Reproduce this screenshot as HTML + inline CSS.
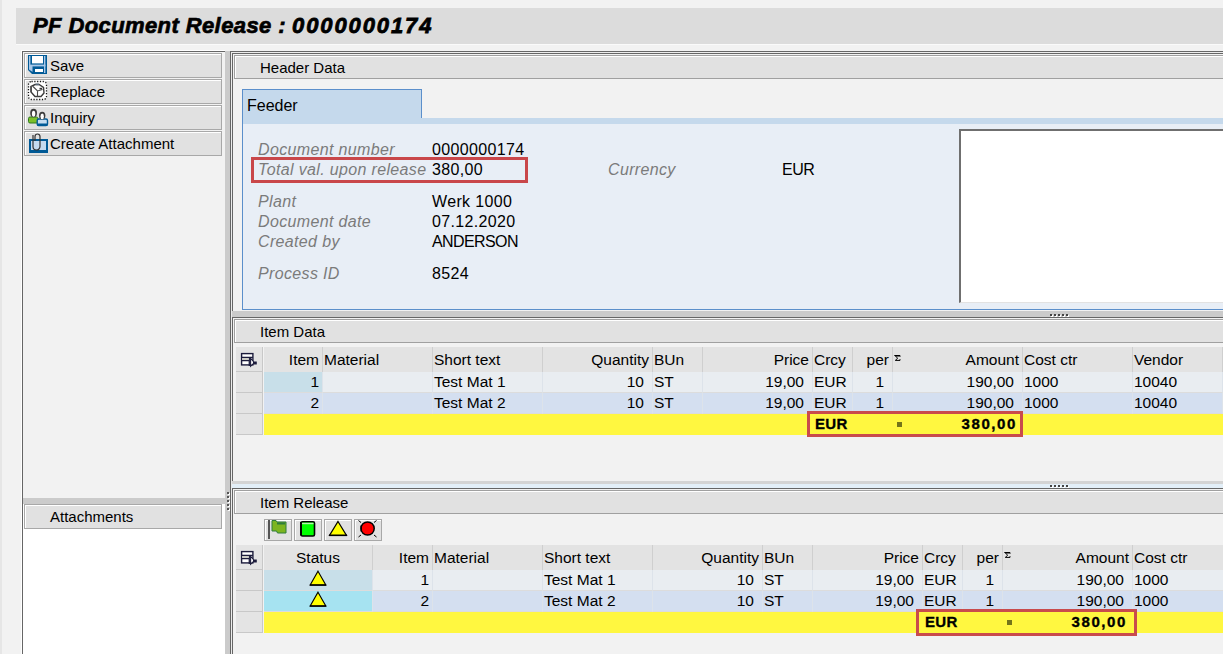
<!DOCTYPE html>
<html><head><meta charset="utf-8">
<style>
*{box-sizing:border-box}
html,body{margin:0;padding:0}
body{width:1223px;height:654px;overflow:hidden;position:relative;background:#f2f2f2;font-family:"Liberation Sans",sans-serif;font-size:15px;color:#000}
.a{position:absolute}
.t{position:absolute;white-space:pre;line-height:17px;font-size:15px;color:#000}
.tt{position:absolute;white-space:pre;line-height:17px;font-size:15.5px;color:#000}
.l{position:absolute;white-space:pre;line-height:17px;font-size:16px;font-style:italic;color:#7b7b7b;letter-spacing:0.35px}
svg{position:absolute;overflow:visible}
</style></head><body>
<div class="a" style="left:0px;top:0px;width:2px;height:654px;background:#e6e6e6"></div>
<div class="a" style="left:16px;top:8px;width:1207px;height:36px;background:#dcdcdc"></div>
<div class="a" style="left:16px;top:44px;width:1207px;height:1px;background:#fafafa"></div>
<div class="t" style="left:33px;top:13px;font-size:22px;line-height:26px;font-weight:bold;font-style:italic;letter-spacing:0.4px;-webkit-text-stroke:0.7px #000">PF Document Release :</div>
<div class="t" style="left:292px;top:13px;font-size:22px;line-height:26px;font-weight:bold;font-style:italic;letter-spacing:1.9px;-webkit-text-stroke:0.8px #000">0000000174</div>
<div class="a" style="left:21px;top:50px;width:204px;height:604px;border-left:1px solid #fff;border-top:1px solid #fff"></div>
<div class="a" style="left:22px;top:51px;width:203px;height:603px;border-left:1px solid #666;border-top:1px solid #666"></div>
<div class="a" style="left:24px;top:53px;width:198px;height:25px;background:#e1e1e1;border:1px solid #a8a8a8;box-shadow:inset 1px 1px 0 #fff"></div>
<div class="t" style="left:50px;top:57px;">Save</div>
<div class="a" style="left:24px;top:79px;width:198px;height:25px;background:#e1e1e1;border:1px solid #a8a8a8;box-shadow:inset 1px 1px 0 #fff"></div>
<div class="t" style="left:50px;top:83px;">Replace</div>
<div class="a" style="left:24px;top:105px;width:198px;height:25px;background:#e1e1e1;border:1px solid #a8a8a8;box-shadow:inset 1px 1px 0 #fff"></div>
<div class="t" style="left:50px;top:109px;">Inquiry</div>
<div class="a" style="left:24px;top:131px;width:198px;height:25px;background:#e1e1e1;border:1px solid #a8a8a8;box-shadow:inset 1px 1px 0 #fff"></div>
<div class="t" style="left:50px;top:135px;">Create Attachment</div>
<svg style="left:28px;top:55px" width="19" height="19" viewBox="0 0 19 19"><path d="M0 0H19V19H4L0 15Z" fill="#005a96"/><rect x="1" y="1" width="1.4" height="9" fill="#a9c8e8"/><rect x="16" y="1" width="1.4" height="17" fill="#a9c8e8"/><rect x="1" y="9.6" width="16.4" height="1.8" fill="#a9c8e8"/><path d="M1 10 H4.5 V17 L1 14.5 Z" fill="#a9c8e8"/><rect x="4" y="1" width="11" height="7.4" fill="#fff"/><rect x="7" y="14" width="8" height="3" fill="#fff"/></svg>
<svg style="left:28px;top:81px" width="19" height="19" viewBox="0 0 19 19"><rect x="0.5" y="0.5" width="18" height="18" rx="3" fill="#fff" stroke="#111" stroke-width="1.3" stroke-dasharray="1.2 1.6"/><path d="M7 3.5 L11 3.5 L15.5 6.5 L16 12 L13 15.5 L7 15.5 L3 11 L3 5.5 Z" fill="#fff" stroke="#3a3a3a" stroke-width="1.4"/><rect x="2.4" y="5" width="1.6" height="6" fill="#505050"/><rect x="7.5" y="2.6" width="3.5" height="1.6" fill="#5a6a7a"/><path d="M5 5.5 L9.5 10 L14.5 8.5 M9.5 10 V15.5" fill="none" stroke="#4a4a4a" stroke-width="1.1"/><rect x="11.5" y="6.8" width="2.6" height="1.6" fill="#333"/></svg>
<svg style="left:28px;top:108px" width="20" height="18" viewBox="0 0 20 18"><rect x="0.5" y="9" width="9.5" height="6" rx="1.5" fill="#7cc02a" stroke="#2f7a1e" stroke-width="1"/><ellipse cx="5.6" cy="5" rx="3.4" ry="4.2" fill="#3c3c3c"/><ellipse cx="5.6" cy="5.8" rx="1.7" ry="3" fill="#fff"/><rect x="9.2" y="11" width="10.3" height="6.5" rx="1.5" fill="#c5dcf0" stroke="#005a96" stroke-width="1.4"/><rect x="9.2" y="15.5" width="10.3" height="2" fill="#005a96"/><ellipse cx="14.2" cy="7.6" rx="3.2" ry="3.9" fill="#3c3c3c"/><ellipse cx="14.2" cy="8.4" rx="1.7" ry="2.8" fill="#fff"/></svg>
<svg style="left:29px;top:133px" width="19" height="20" viewBox="0 0 19 20"><rect x="1" y="7" width="17" height="12" fill="#c3daf0" stroke="#005a96" stroke-width="2"/><rect x="0" y="17" width="19" height="2" fill="#005a96"/><path d="M4 2 V13.5 A3.5 3.5 0 0 0 11 13.5 V3.5 A2.5 2.5 0 0 0 6 3.5 V8" fill="none" stroke="#333" stroke-width="1.2"/></svg>
<div class="a" style="left:23px;top:498px;width:202px;height:6px;background:#cbcbcb"></div>
<div class="a" style="left:23px;top:504px;width:202px;height:150px;background:#fff"></div>
<div class="a" style="left:24px;top:504px;width:198px;height:25px;background:#e1e1e1;border:1px solid #a8a8a8;box-shadow:inset 1px 1px 0 #fff"></div>
<div class="t" style="left:50px;top:508px;">Attachments</div>
<div class="a" style="left:225px;top:51px;width:5px;height:603px;background:#cbcbcb"></div>
<div class="a" style="left:227px;top:492px;width:2px;height:2px;background:#555;box-shadow:1px 1px 0 #fff"></div>
<div class="a" style="left:227px;top:496px;width:2px;height:2px;background:#555;box-shadow:1px 1px 0 #fff"></div>
<div class="a" style="left:227px;top:500px;width:2px;height:2px;background:#555;box-shadow:1px 1px 0 #fff"></div>
<div class="a" style="left:227px;top:504px;width:2px;height:2px;background:#555;box-shadow:1px 1px 0 #fff"></div>
<div class="a" style="left:227px;top:508px;width:2px;height:2px;background:#555;box-shadow:1px 1px 0 #fff"></div>
<div class="a" style="left:230px;top:51px;width:993px;height:603px;border-left:1px solid #666;border-top:1px solid #666"></div>
<div class="a" style="left:231px;top:52px;width:992px;height:602px;border-left:1px solid #ececec;border-top:1px solid #ececec"></div>
<div class="a" style="left:232px;top:53px;width:991px;height:258px;border-left:1px solid #666;border-top:1px solid #666"></div>
<div class="a" style="left:234px;top:55px;width:989px;height:24px;background:#e1e1e1;border:1px solid #a0a0a0;border-right:none;box-shadow:inset 1px 1px 0 #fff"></div>
<div class="t" style="left:260px;top:59px;">Header Data</div>
<div class="a" style="left:242px;top:89px;width:180px;height:30px;background:#c5d9ec;border:1px solid #5b8fcb;border-bottom:none"></div>
<div class="a" style="left:242px;top:118px;width:981px;height:6px;background:#c5d9ec;border-left:1px solid #5b8fcb"></div>
<div class="a" style="left:242px;top:124px;width:981px;height:186px;background:#e8eef6;border-left:1px solid #5b8fcb;border-bottom:1px solid #5b8fcb"></div>
<div class="t" style="left:247px;top:97px;font-size:16px">Feeder</div>
<div class="l" style="left:258px;top:141px;">Document number</div>
<div class="t" style="left:432px;top:141px;font-size:16px;letter-spacing:0.35px">0000000174</div>
<div class="l" style="left:258px;top:161px;">Total val. upon release</div>
<div class="t" style="left:432px;top:161px;font-size:16px;letter-spacing:0.35px">380,00</div>
<div class="l" style="left:258px;top:193px;">Plant</div>
<div class="t" style="left:432px;top:193px;font-size:16px;letter-spacing:0.35px">Werk 1000</div>
<div class="l" style="left:258px;top:213px;">Document date</div>
<div class="t" style="left:432px;top:213px;font-size:16px;letter-spacing:0.35px">07.12.2020</div>
<div class="l" style="left:258px;top:233px;">Created by</div>
<div class="t" style="left:432px;top:233px;font-size:16px;letter-spacing:-0.6px">ANDERSON</div>
<div class="l" style="left:258px;top:265px;">Process ID</div>
<div class="t" style="left:432px;top:265px;font-size:16px;letter-spacing:0.35px">8524</div>
<div class="l" style="left:608px;top:161px;">Currency</div>
<div class="t" style="left:782px;top:161px;font-size:16px;letter-spacing:-0.5px">EUR</div>
<div class="a" style="left:251px;top:157px;width:277px;height:26px;border:3px solid #c9474a"></div>
<div class="a" style="left:959px;top:129px;width:264px;height:174px;background:#fff;border-top:2px solid #6f6f6f;border-left:2px solid #6f6f6f;border-bottom:1px solid #e2e2e2"></div>
<div class="a" style="left:232px;top:311px;width:991px;height:6px;background:#cbcbcb"></div>
<div class="a" style="left:1050px;top:314px;width:2px;height:2px;background:#444;box-shadow:1px 1px 0 #fff"></div>
<div class="a" style="left:1054px;top:314px;width:2px;height:2px;background:#444;box-shadow:1px 1px 0 #fff"></div>
<div class="a" style="left:1058px;top:314px;width:2px;height:2px;background:#444;box-shadow:1px 1px 0 #fff"></div>
<div class="a" style="left:1062px;top:314px;width:2px;height:2px;background:#444;box-shadow:1px 1px 0 #fff"></div>
<div class="a" style="left:1066px;top:314px;width:2px;height:2px;background:#444;box-shadow:1px 1px 0 #fff"></div>
<div class="a" style="left:232px;top:317px;width:991px;height:166px;border-left:1px solid #666;border-top:1px solid #666"></div>
<div class="a" style="left:232px;top:484px;width:2px;height:2px;background:#000"></div>
<div class="a" style="left:232px;top:486px;width:2px;height:2px;background:#000"></div>
<div class="a" style="left:234px;top:319px;width:989px;height:24px;background:#e1e1e1;border:1px solid #a0a0a0;border-right:none;box-shadow:inset 1px 1px 0 #fff"></div>
<div class="t" style="left:260px;top:323px;">Item Data</div>
<div class="a" style="left:236px;top:347px;width:27px;height:25px;background:#e4e4e4;border-right:1px solid #c8c8c8;border-bottom:1px solid #c8c8c8"></div>
<div class="a" style="left:236px;top:372px;width:27px;height:21px;background:#e4e4e4;border-right:1px solid #c8c8c8;border-bottom:1px solid #c8c8c8"></div>
<div class="a" style="left:236px;top:393px;width:27px;height:21px;background:#e4e4e4;border-right:1px solid #c8c8c8;border-bottom:1px solid #c8c8c8"></div>
<div class="a" style="left:236px;top:414px;width:27px;height:21px;background:#e4e4e4;border-right:1px solid #c8c8c8;border-bottom:1px solid #c8c8c8"></div>
<svg style="left:240px;top:352px" width="18" height="16" viewBox="0 0 18 16"><rect x="1.6" y="1.6" width="11.3" height="11.3" fill="#fff" stroke="#1c1c3c" stroke-width="1.4"/><path d="M1.6 5.3 H12.9 M1.6 8.6 H9.3 M9.3 5.3 V14" stroke="#1c1c3c" stroke-width="1.3" fill="none"/><rect x="2.4" y="6.1" width="6.2" height="1.8" fill="#c9c9c0"/><path d="M10.6 6.2 V14.2 L12.8 12 H16.2 V10 H13.8 Z" fill="#fff" stroke="#1c1c3c" stroke-width="1.1"/><rect x="13" y="10" width="3.2" height="2" fill="#1c1c3c"/></svg>
<div class="a" style="left:264px;top:347px;width:59px;height:25px;background:#e3e3e3;border-right:1px solid #cfcfcf;box-shadow:1px 0 0 #f6f6f6"></div>
<div class="tt" style="right:904px;top:351px;">Item</div>
<div class="a" style="left:323px;top:347px;width:110px;height:25px;background:#e3e3e3;border-right:1px solid #cfcfcf;box-shadow:1px 0 0 #f6f6f6"></div>
<div class="tt" style="left:324px;top:351px;">Material</div>
<div class="a" style="left:433px;top:347px;width:110px;height:25px;background:#e3e3e3;border-right:1px solid #cfcfcf;box-shadow:1px 0 0 #f6f6f6"></div>
<div class="tt" style="left:434px;top:351px;">Short text</div>
<div class="a" style="left:543px;top:347px;width:110px;height:25px;background:#e3e3e3;border-right:1px solid #cfcfcf;box-shadow:1px 0 0 #f6f6f6"></div>
<div class="tt" style="right:574px;top:351px;">Quantity</div>
<div class="a" style="left:653px;top:347px;width:50px;height:25px;background:#e3e3e3;border-right:1px solid #cfcfcf;box-shadow:1px 0 0 #f6f6f6"></div>
<div class="tt" style="left:654px;top:351px;">BUn</div>
<div class="a" style="left:703px;top:347px;width:110px;height:25px;background:#e3e3e3;border-right:1px solid #cfcfcf;box-shadow:1px 0 0 #f6f6f6"></div>
<div class="tt" style="right:414px;top:351px;">Price</div>
<div class="a" style="left:813px;top:347px;width:40px;height:25px;background:#e3e3e3;border-right:1px solid #cfcfcf;box-shadow:1px 0 0 #f6f6f6"></div>
<div class="tt" style="left:814px;top:351px;">Crcy</div>
<div class="a" style="left:853px;top:347px;width:40px;height:25px;background:#e3e3e3;border-right:1px solid #cfcfcf;box-shadow:1px 0 0 #f6f6f6"></div>
<div class="tt" style="right:334px;top:351px;">per</div>
<div class="a" style="left:893px;top:347px;width:130px;height:25px;background:#e3e3e3;border-right:1px solid #cfcfcf;box-shadow:1px 0 0 #f6f6f6"></div>
<div class="tt" style="right:204px;top:351px;">Amount</div>
<div class="a" style="left:1023px;top:347px;width:110px;height:25px;background:#e3e3e3;border-right:1px solid #cfcfcf;box-shadow:1px 0 0 #f6f6f6"></div>
<div class="tt" style="left:1024px;top:351px;">Cost ctr</div>
<div class="a" style="left:1133px;top:347px;width:90px;height:25px;background:#e3e3e3;border-right:1px solid #cfcfcf;box-shadow:1px 0 0 #f6f6f6"></div>
<div class="tt" style="left:1134px;top:351px;">Vendor</div>
<div class="a" style="left:264px;top:372px;width:59px;height:21px;background:#c8dfe9;border-right:1px solid #dde3ea;border-bottom:1px solid #dcdcdc"></div>
<div class="tt" style="right:904px;top:373px;">1</div>
<div class="a" style="left:323px;top:372px;width:110px;height:21px;background:#e9edf1;border-right:1px solid #dde3ea;border-bottom:1px solid #dcdcdc"></div>
<div class="a" style="left:433px;top:372px;width:110px;height:21px;background:#e9edf1;border-right:1px solid #dde3ea;border-bottom:1px solid #dcdcdc"></div>
<div class="tt" style="left:434px;top:373px;">Test Mat 1</div>
<div class="a" style="left:543px;top:372px;width:110px;height:21px;background:#e9edf1;border-right:1px solid #dde3ea;border-bottom:1px solid #dcdcdc"></div>
<div class="tt" style="right:579px;top:373px;">10</div>
<div class="a" style="left:653px;top:372px;width:50px;height:21px;background:#e9edf1;border-right:1px solid #dde3ea;border-bottom:1px solid #dcdcdc"></div>
<div class="tt" style="left:654px;top:373px;">ST</div>
<div class="a" style="left:703px;top:372px;width:110px;height:21px;background:#e9edf1;border-right:1px solid #dde3ea;border-bottom:1px solid #dcdcdc"></div>
<div class="tt" style="right:419px;top:373px;">19,00</div>
<div class="a" style="left:813px;top:372px;width:40px;height:21px;background:#e9edf1;border-right:1px solid #dde3ea;border-bottom:1px solid #dcdcdc"></div>
<div class="tt" style="left:814px;top:373px;">EUR</div>
<div class="a" style="left:853px;top:372px;width:40px;height:21px;background:#e9edf1;border-right:1px solid #dde3ea;border-bottom:1px solid #dcdcdc"></div>
<div class="tt" style="right:339px;top:373px;">1</div>
<div class="a" style="left:893px;top:372px;width:130px;height:21px;background:#e9edf1;border-right:1px solid #dde3ea;border-bottom:1px solid #dcdcdc"></div>
<div class="tt" style="right:209px;top:373px;">190,00</div>
<div class="a" style="left:1023px;top:372px;width:110px;height:21px;background:#e9edf1;border-right:1px solid #dde3ea;border-bottom:1px solid #dcdcdc"></div>
<div class="tt" style="left:1024px;top:373px;">1000</div>
<div class="a" style="left:1133px;top:372px;width:90px;height:21px;background:#e9edf1;border-right:1px solid #dde3ea;border-bottom:1px solid #dcdcdc"></div>
<div class="tt" style="left:1134px;top:373px;">10040</div>
<div class="a" style="left:264px;top:393px;width:59px;height:21px;background:#d4dff0;border-right:1px solid #dde3ea;border-bottom:1px solid #dcdcdc"></div>
<div class="tt" style="right:904px;top:394px;">2</div>
<div class="a" style="left:323px;top:393px;width:110px;height:21px;background:#d4dff0;border-right:1px solid #dde3ea;border-bottom:1px solid #dcdcdc"></div>
<div class="a" style="left:433px;top:393px;width:110px;height:21px;background:#d4dff0;border-right:1px solid #dde3ea;border-bottom:1px solid #dcdcdc"></div>
<div class="tt" style="left:434px;top:394px;">Test Mat 2</div>
<div class="a" style="left:543px;top:393px;width:110px;height:21px;background:#d4dff0;border-right:1px solid #dde3ea;border-bottom:1px solid #dcdcdc"></div>
<div class="tt" style="right:579px;top:394px;">10</div>
<div class="a" style="left:653px;top:393px;width:50px;height:21px;background:#d4dff0;border-right:1px solid #dde3ea;border-bottom:1px solid #dcdcdc"></div>
<div class="tt" style="left:654px;top:394px;">ST</div>
<div class="a" style="left:703px;top:393px;width:110px;height:21px;background:#d4dff0;border-right:1px solid #dde3ea;border-bottom:1px solid #dcdcdc"></div>
<div class="tt" style="right:419px;top:394px;">19,00</div>
<div class="a" style="left:813px;top:393px;width:40px;height:21px;background:#d4dff0;border-right:1px solid #dde3ea;border-bottom:1px solid #dcdcdc"></div>
<div class="tt" style="left:814px;top:394px;">EUR</div>
<div class="a" style="left:853px;top:393px;width:40px;height:21px;background:#d4dff0;border-right:1px solid #dde3ea;border-bottom:1px solid #dcdcdc"></div>
<div class="tt" style="right:339px;top:394px;">1</div>
<div class="a" style="left:893px;top:393px;width:130px;height:21px;background:#d4dff0;border-right:1px solid #dde3ea;border-bottom:1px solid #dcdcdc"></div>
<div class="tt" style="right:209px;top:394px;">190,00</div>
<div class="a" style="left:1023px;top:393px;width:110px;height:21px;background:#d4dff0;border-right:1px solid #dde3ea;border-bottom:1px solid #dcdcdc"></div>
<div class="tt" style="left:1024px;top:394px;">1000</div>
<div class="a" style="left:1133px;top:393px;width:90px;height:21px;background:#d4dff0;border-right:1px solid #dde3ea;border-bottom:1px solid #dcdcdc"></div>
<div class="tt" style="left:1134px;top:394px;">10040</div>
<div class="a" style="left:264px;top:414px;width:959px;height:21px;background:#fff740"></div>
<div class="t" style="left:815px;top:415px;font-weight:bold;letter-spacing:0.3px;-webkit-text-stroke:0.3px #000">EUR</div>
<div class="a" style="left:897px;top:422px;width:5px;height:5px;background:#74741a"></div>
<div class="t" style="right:206px;top:415px;font-weight:bold;letter-spacing:1.6px;-webkit-text-stroke:0.35px #000">380,00</div>
<div class="a" style="left:807px;top:411px;width:216px;height:26px;border:3px solid #c94b4c"></div>
<svg style="left:894px;top:355px" width="7" height="7" viewBox="0 0 7 7"><path d="M0.3 0.5 H6 V1.8 M5.5 1 H1.3 L3.7 3.2 L1.3 5.4 H6 V4.2" fill="none" stroke="#000" stroke-width="1"/></svg>
<div class="a" style="left:232px;top:481px;width:991px;height:3px;background:#d4d4d4"></div>
<div class="a" style="left:232px;top:484px;width:991px;height:4px;background:#e3eff8"></div>
<div class="a" style="left:1050px;top:485px;width:2px;height:2px;background:#444;box-shadow:1px 1px 0 #fff"></div>
<div class="a" style="left:1054px;top:485px;width:2px;height:2px;background:#444;box-shadow:1px 1px 0 #fff"></div>
<div class="a" style="left:1058px;top:485px;width:2px;height:2px;background:#444;box-shadow:1px 1px 0 #fff"></div>
<div class="a" style="left:1062px;top:485px;width:2px;height:2px;background:#444;box-shadow:1px 1px 0 #fff"></div>
<div class="a" style="left:1066px;top:485px;width:2px;height:2px;background:#444;box-shadow:1px 1px 0 #fff"></div>
<div class="a" style="left:232px;top:488px;width:991px;height:166px;border-left:1px solid #666;border-top:1px solid #666"></div>
<div class="a" style="left:234px;top:490px;width:989px;height:24px;background:#e1e1e1;border:1px solid #a0a0a0;border-right:none;box-shadow:inset 1px 1px 0 #fff"></div>
<div class="t" style="left:260px;top:494px;">Item Release</div>
<div class="a" style="left:264px;top:519px;width:28px;height:22px;background:#e1e1e1;border:1px solid #a8a8a8;box-shadow:inset 1px 1px 0 #fff"></div>
<div class="a" style="left:294px;top:519px;width:28px;height:22px;background:#e1e1e1;border:1px solid #a8a8a8;box-shadow:inset 1px 1px 0 #fff"></div>
<div class="a" style="left:324px;top:519px;width:28px;height:22px;background:#e1e1e1;border:1px solid #a8a8a8;box-shadow:inset 1px 1px 0 #fff"></div>
<div class="a" style="left:354px;top:519px;width:28px;height:22px;background:#e1e1e1;border:1px solid #a8a8a8;box-shadow:inset 1px 1px 0 #fff"></div>
<svg style="left:268px;top:520px" width="20" height="20" viewBox="0 0 20 20"><rect x="0" y="0" width="2" height="19" fill="#555"/><path d="M4 0.5 H8 L9 2 H18 V13 H9.5 L8.5 11 H4 Z" fill="#7cb51f" stroke="#2e7d3b" stroke-width="1"/><rect x="9" y="2.5" width="8" height="2" fill="#2e7d3b"/></svg>
<svg style="left:300px;top:521px" width="16" height="16" viewBox="0 0 16 16"><rect x="1" y="0.8" width="13.5" height="14.2" rx="1.5" fill="#00ff00" stroke="#000" stroke-width="1.6"/><rect x="0" y="1" width="2" height="13.5" fill="#000"/><rect x="2" y="1.8" width="11.5" height="1.4" fill="#b8f0b0"/></svg>
<svg style="left:328px;top:520px" width="20" height="17" viewBox="0 0 20 17"><path d="M10 1.5 L18.5 15.5 L1.5 15.5 Z" fill="#ffff00" stroke="#000" stroke-width="1.2"/><rect x="1" y="14.5" width="18" height="1.6" fill="#000"/></svg>
<svg style="left:358px;top:520px" width="20" height="18" viewBox="0 0 20 18"><path d="M0.5 0.5 L3 2.5 M18.5 0.5 L16 2.5 M0.5 17 L3 15 M18.5 17 L16 15" stroke="#000" stroke-width="1"/><circle cx="9.6" cy="8.5" r="6.6" fill="#ff0000" stroke="#000" stroke-width="1.5"/><rect x="2.5" y="5.5" width="1.5" height="6" fill="#000"/></svg>
<div class="a" style="left:236px;top:545px;width:27px;height:25px;background:#e4e4e4;border-right:1px solid #c8c8c8;border-bottom:1px solid #c8c8c8"></div>
<div class="a" style="left:236px;top:570px;width:27px;height:21px;background:#e4e4e4;border-right:1px solid #c8c8c8;border-bottom:1px solid #c8c8c8"></div>
<div class="a" style="left:236px;top:591px;width:27px;height:21px;background:#e4e4e4;border-right:1px solid #c8c8c8;border-bottom:1px solid #c8c8c8"></div>
<div class="a" style="left:236px;top:612px;width:27px;height:21px;background:#e4e4e4;border-right:1px solid #c8c8c8;border-bottom:1px solid #c8c8c8"></div>
<svg style="left:240px;top:550px" width="18" height="16" viewBox="0 0 18 16"><rect x="1.6" y="1.6" width="11.3" height="11.3" fill="#fff" stroke="#1c1c3c" stroke-width="1.4"/><path d="M1.6 5.3 H12.9 M1.6 8.6 H9.3 M9.3 5.3 V14" stroke="#1c1c3c" stroke-width="1.3" fill="none"/><rect x="2.4" y="6.1" width="6.2" height="1.8" fill="#c9c9c0"/><path d="M10.6 6.2 V14.2 L12.8 12 H16.2 V10 H13.8 Z" fill="#fff" stroke="#1c1c3c" stroke-width="1.1"/><rect x="13" y="10" width="3.2" height="2" fill="#1c1c3c"/></svg>
<div class="a" style="left:264px;top:545px;width:109px;height:25px;background:#e3e3e3;border-right:1px solid #cfcfcf;box-shadow:1px 0 0 #f6f6f6"></div>
<div class="tt" style="left:218px;width:200px;text-align:center;top:549px;">Status</div>
<div class="a" style="left:373px;top:545px;width:60px;height:25px;background:#e3e3e3;border-right:1px solid #cfcfcf;box-shadow:1px 0 0 #f6f6f6"></div>
<div class="tt" style="right:794px;top:549px;">Item</div>
<div class="a" style="left:433px;top:545px;width:110px;height:25px;background:#e3e3e3;border-right:1px solid #cfcfcf;box-shadow:1px 0 0 #f6f6f6"></div>
<div class="tt" style="left:434px;top:549px;">Material</div>
<div class="a" style="left:543px;top:545px;width:110px;height:25px;background:#e3e3e3;border-right:1px solid #cfcfcf;box-shadow:1px 0 0 #f6f6f6"></div>
<div class="tt" style="left:544px;top:549px;">Short text</div>
<div class="a" style="left:653px;top:545px;width:110px;height:25px;background:#e3e3e3;border-right:1px solid #cfcfcf;box-shadow:1px 0 0 #f6f6f6"></div>
<div class="tt" style="right:464px;top:549px;">Quantity</div>
<div class="a" style="left:763px;top:545px;width:50px;height:25px;background:#e3e3e3;border-right:1px solid #cfcfcf;box-shadow:1px 0 0 #f6f6f6"></div>
<div class="tt" style="left:764px;top:549px;">BUn</div>
<div class="a" style="left:813px;top:545px;width:110px;height:25px;background:#e3e3e3;border-right:1px solid #cfcfcf;box-shadow:1px 0 0 #f6f6f6"></div>
<div class="tt" style="right:304px;top:549px;">Price</div>
<div class="a" style="left:923px;top:545px;width:40px;height:25px;background:#e3e3e3;border-right:1px solid #cfcfcf;box-shadow:1px 0 0 #f6f6f6"></div>
<div class="tt" style="left:924px;top:549px;">Crcy</div>
<div class="a" style="left:963px;top:545px;width:40px;height:25px;background:#e3e3e3;border-right:1px solid #cfcfcf;box-shadow:1px 0 0 #f6f6f6"></div>
<div class="tt" style="right:224px;top:549px;">per</div>
<div class="a" style="left:1003px;top:545px;width:130px;height:25px;background:#e3e3e3;border-right:1px solid #cfcfcf;box-shadow:1px 0 0 #f6f6f6"></div>
<div class="tt" style="right:94px;top:549px;">Amount</div>
<div class="a" style="left:1133px;top:545px;width:91px;height:25px;background:#e3e3e3;border-right:1px solid #cfcfcf;box-shadow:1px 0 0 #f6f6f6"></div>
<div class="tt" style="left:1134px;top:549px;">Cost ctr</div>
<div class="a" style="left:264px;top:570px;width:109px;height:21px;background:#c8dfe9;border-right:1px solid #dde3ea;border-bottom:1px solid #dcdcdc"></div>
<svg style="left:309px;top:570px" width="18" height="16" viewBox="0 0 18 16"><path d="M9 1.2 L16.8 15 L1.2 15 Z" fill="#ffff00" stroke="#000" stroke-width="1.1" stroke-linejoin="miter"/><rect x="0.8" y="14.3" width="16.4" height="1.5" fill="#000"/></svg>
<div class="a" style="left:373px;top:570px;width:60px;height:21px;background:#e9edf1;border-right:1px solid #dde3ea;border-bottom:1px solid #dcdcdc"></div>
<div class="tt" style="right:794px;top:571px;">1</div>
<div class="a" style="left:433px;top:570px;width:110px;height:21px;background:#e9edf1;border-right:1px solid #dde3ea;border-bottom:1px solid #dcdcdc"></div>
<div class="a" style="left:543px;top:570px;width:110px;height:21px;background:#e9edf1;border-right:1px solid #dde3ea;border-bottom:1px solid #dcdcdc"></div>
<div class="tt" style="left:544px;top:571px;">Test Mat 1</div>
<div class="a" style="left:653px;top:570px;width:110px;height:21px;background:#e9edf1;border-right:1px solid #dde3ea;border-bottom:1px solid #dcdcdc"></div>
<div class="tt" style="right:469px;top:571px;">10</div>
<div class="a" style="left:763px;top:570px;width:50px;height:21px;background:#e9edf1;border-right:1px solid #dde3ea;border-bottom:1px solid #dcdcdc"></div>
<div class="tt" style="left:764px;top:571px;">ST</div>
<div class="a" style="left:813px;top:570px;width:110px;height:21px;background:#e9edf1;border-right:1px solid #dde3ea;border-bottom:1px solid #dcdcdc"></div>
<div class="tt" style="right:309px;top:571px;">19,00</div>
<div class="a" style="left:923px;top:570px;width:40px;height:21px;background:#e9edf1;border-right:1px solid #dde3ea;border-bottom:1px solid #dcdcdc"></div>
<div class="tt" style="left:924px;top:571px;">EUR</div>
<div class="a" style="left:963px;top:570px;width:40px;height:21px;background:#e9edf1;border-right:1px solid #dde3ea;border-bottom:1px solid #dcdcdc"></div>
<div class="tt" style="right:229px;top:571px;">1</div>
<div class="a" style="left:1003px;top:570px;width:130px;height:21px;background:#e9edf1;border-right:1px solid #dde3ea;border-bottom:1px solid #dcdcdc"></div>
<div class="tt" style="right:99px;top:571px;">190,00</div>
<div class="a" style="left:1133px;top:570px;width:91px;height:21px;background:#e9edf1;border-right:1px solid #dde3ea;border-bottom:1px solid #dcdcdc"></div>
<div class="tt" style="left:1134px;top:571px;">1000</div>
<div class="a" style="left:264px;top:591px;width:109px;height:21px;background:#a6e3f1;border-right:1px solid #dde3ea;border-bottom:1px solid #dcdcdc"></div>
<svg style="left:309px;top:591px" width="18" height="16" viewBox="0 0 18 16"><path d="M9 1.2 L16.8 15 L1.2 15 Z" fill="#ffff00" stroke="#000" stroke-width="1.1" stroke-linejoin="miter"/><rect x="0.8" y="14.3" width="16.4" height="1.5" fill="#000"/></svg>
<div class="a" style="left:373px;top:591px;width:60px;height:21px;background:#d4dff0;border-right:1px solid #dde3ea;border-bottom:1px solid #dcdcdc"></div>
<div class="tt" style="right:794px;top:592px;">2</div>
<div class="a" style="left:433px;top:591px;width:110px;height:21px;background:#d4dff0;border-right:1px solid #dde3ea;border-bottom:1px solid #dcdcdc"></div>
<div class="a" style="left:543px;top:591px;width:110px;height:21px;background:#d4dff0;border-right:1px solid #dde3ea;border-bottom:1px solid #dcdcdc"></div>
<div class="tt" style="left:544px;top:592px;">Test Mat 2</div>
<div class="a" style="left:653px;top:591px;width:110px;height:21px;background:#d4dff0;border-right:1px solid #dde3ea;border-bottom:1px solid #dcdcdc"></div>
<div class="tt" style="right:469px;top:592px;">10</div>
<div class="a" style="left:763px;top:591px;width:50px;height:21px;background:#d4dff0;border-right:1px solid #dde3ea;border-bottom:1px solid #dcdcdc"></div>
<div class="tt" style="left:764px;top:592px;">ST</div>
<div class="a" style="left:813px;top:591px;width:110px;height:21px;background:#d4dff0;border-right:1px solid #dde3ea;border-bottom:1px solid #dcdcdc"></div>
<div class="tt" style="right:309px;top:592px;">19,00</div>
<div class="a" style="left:923px;top:591px;width:40px;height:21px;background:#d4dff0;border-right:1px solid #dde3ea;border-bottom:1px solid #dcdcdc"></div>
<div class="tt" style="left:924px;top:592px;">EUR</div>
<div class="a" style="left:963px;top:591px;width:40px;height:21px;background:#d4dff0;border-right:1px solid #dde3ea;border-bottom:1px solid #dcdcdc"></div>
<div class="tt" style="right:229px;top:592px;">1</div>
<div class="a" style="left:1003px;top:591px;width:130px;height:21px;background:#d4dff0;border-right:1px solid #dde3ea;border-bottom:1px solid #dcdcdc"></div>
<div class="tt" style="right:99px;top:592px;">190,00</div>
<div class="a" style="left:1133px;top:591px;width:91px;height:21px;background:#d4dff0;border-right:1px solid #dde3ea;border-bottom:1px solid #dcdcdc"></div>
<div class="tt" style="left:1134px;top:592px;">1000</div>
<div class="a" style="left:264px;top:612px;width:959px;height:21px;background:#fff740"></div>
<div class="t" style="left:925px;top:613px;font-weight:bold;letter-spacing:0.3px;-webkit-text-stroke:0.3px #000">EUR</div>
<div class="a" style="left:1007px;top:620px;width:5px;height:5px;background:#74741a"></div>
<div class="t" style="right:96px;top:613px;font-weight:bold;letter-spacing:1.6px;-webkit-text-stroke:0.35px #000">380,00</div>
<div class="a" style="left:916px;top:609px;width:221px;height:27px;border:3px solid #c94b4c"></div>
<svg style="left:1004px;top:552px" width="7" height="7" viewBox="0 0 7 7"><path d="M0.3 0.5 H6 V1.8 M5.5 1 H1.3 L3.7 3.2 L1.3 5.4 H6 V4.2" fill="none" stroke="#000" stroke-width="1"/></svg>
</body></html>
